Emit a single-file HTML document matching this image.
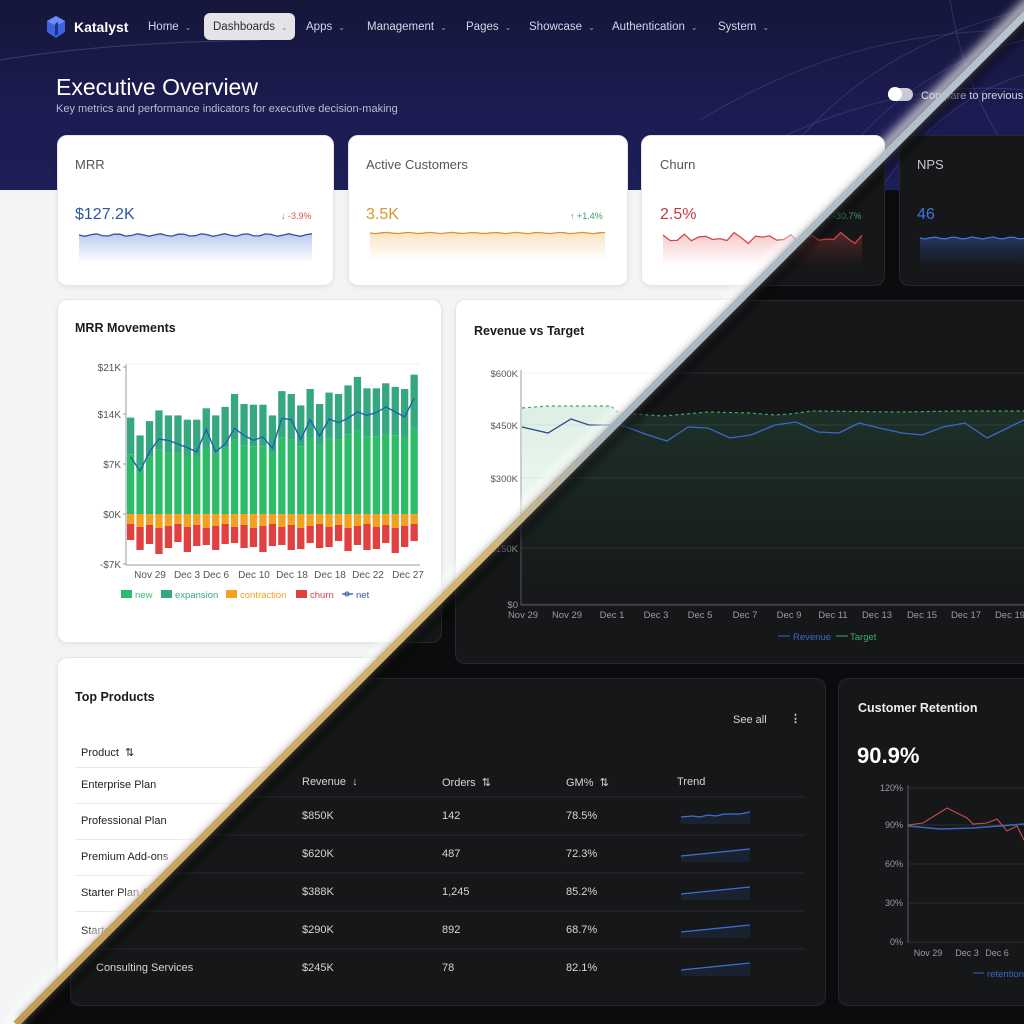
<!DOCTYPE html>
<html><head><meta charset="utf-8">
<style>
*{box-sizing:border-box;margin:0;padding:0}
body{width:1024px;height:1024px;overflow:hidden;font-family:"Liberation Sans",sans-serif;position:relative;background:#f3f4f6}
.layer{position:absolute;left:0;top:0;width:1024px;height:1024px;overflow:hidden}
#light{background:#f3f4f6}
#dark{background:#0c0c0e;clip-path:polygon(1024px 16px,1024px 1024px,16px 1024px)}
.hdr{position:absolute;left:0;top:0;width:1024px;height:190px;background:linear-gradient(180deg,#15163a 0%,#1c1c52 60%,#1d1e56 100%)}
.abs{position:absolute;white-space:nowrap}
.card{position:absolute;border-radius:10px}
#light .card{background:#fff;border:1px solid #e3e5ea;box-shadow:0 2px 6px rgba(0,0,0,.06)}
#dark .card{background:#161719;border:1px solid #26282c}
.nav{font-size:11.5px;color:#d4d7e6}
.nav span.c{font-size:8px;margin-left:6px;color:#9aa0bb}
.lbl{font-size:13px}
#light .lbl{color:#555}
#dark .lbl{color:#c8c8cc}
.ttl{font-size:12.5px;font-weight:bold}
#light .ttl{color:#1b1b1f}
#dark .ttl{color:#eee}
.tx{font-size:11px}
#light .tx{color:#222}
#dark .tx{color:#d6d6d8}
svg text{font-family:"Liberation Sans",sans-serif}
</style></head><body>

<div id="light" class="layer">
  <div class="hdr"></div>
  <svg class="abs" style="left:0;top:0" width="1024" height="190">
    <g fill="none" stroke="#5560a8" stroke-opacity=".35" stroke-width="1">
      <path d="M760 190 C820 100 900 40 1024 10"/>
      <path d="M820 190 C870 110 940 60 1024 40"/>
      <path d="M880 190 C920 130 970 90 1024 75"/>
      <path d="M700 120 C800 60 900 30 1024 30"/>
      <path d="M720 170 C820 110 930 80 1024 90"/>
      <path d="M950 0 C960 60 980 120 1024 170"/>
      <path d="M0 60 C60 50 140 42 260 40" stroke="#8890c8" stroke-opacity=".3"/>
    </g>
  </svg>
  <svg class="abs" style="left:46px;top:15px" width="20" height="24" viewBox="0 0 20 24">
    <path d="M10 1 L19 6 L19 17 L10 23 L1 17 L1 6 Z" fill="#3f63e0"/>
    <path d="M10 1 L19 6 L10 11 L1 6 Z" fill="#6b8cf5"/>
    <path d="M9 9 L12 7 L12 19 L9 21 Z" fill="#1c2f8a"/>
  </svg>
  <div class="abs" style="left:74px;top:19px;font-size:14px;color:#fff;font-weight:bold">Katalyst</div>
  <div class="abs nav" style="left:148px;top:21px">Home<span class="c">⌄</span></div>
  <div class="abs" style="left:204px;top:13px;width:91px;height:27px;border-radius:6px;background:#e4e4e8"></div>
  <div class="abs nav" style="left:213px;top:21px;color:#2a2a33">Dashboards<span class="c" style="color:#888">⌄</span></div>
  <div class="abs nav" style="left:306px;top:21px">Apps<span class="c">⌄</span></div>
  <div class="abs nav" style="left:367px;top:21px">Management<span class="c">⌄</span></div>
  <div class="abs nav" style="left:466px;top:21px">Pages<span class="c">⌄</span></div>
  <div class="abs nav" style="left:529px;top:21px">Showcase<span class="c">⌄</span></div>
  <div class="abs nav" style="left:612px;top:21px">Authentication<span class="c">⌄</span></div>
  <div class="abs nav" style="left:718px;top:21px">System<span class="c">⌄</span></div>
  <div class="abs" style="left:56px;top:74px;font-size:23px;color:#fff">Executive Overview</div>
  <div class="abs" style="left:56px;top:103px;font-size:11px;color:#b9bdd4">Key metrics and performance indicators for executive decision-making</div>
  <div class="abs" style="left:888px;top:88px;width:25px;height:13px;border-radius:7px;background:#c8cad6"></div>
  <div class="abs" style="left:888px;top:87px;width:14px;height:14px;border-radius:7px;background:#fff"></div>
  <div class="abs" style="left:921px;top:90px;font-size:11px;color:#d4d7e6">Compare to previous</div>

  <div class="card" style="left:57px;top:135px;width:277px;height:151px"></div>
  <div class="card" style="left:348px;top:135px;width:280px;height:151px"></div>
  <div class="card" style="left:641px;top:135px;width:244px;height:151px"></div>
  <div class="abs lbl" style="left:75px;top:157px">MRR</div>
  <div class="abs lbl" style="left:366px;top:157px">Active Customers</div>
  <div class="abs lbl" style="left:660px;top:157px">Churn</div>
  <div class="abs" style="left:75px;top:206px;font-size:16px;color:#2d56a0">$127.2K</div>
  <div class="abs" style="left:366px;top:206px;font-size:16px;color:#d99530">3.5K</div>
  <div class="abs" style="left:660px;top:206px;font-size:16px;color:#c9373d">2.5%</div>
  <div class="abs" style="left:281px;top:211px;font-size:9px;color:#d0574f">↓ -3.9%</div>
  <div class="abs" style="left:570px;top:211px;font-size:9px;color:#3aa164">↑ +1.4%</div>

  <div class="card" style="left:57px;top:299px;width:385px;height:344px"></div>
  <div class="abs ttl" style="left:75px;top:321px">MRR Movements</div>
  <div class="card" style="left:455px;top:299px;width:600px;height:365px"></div>
  <div class="abs ttl" style="left:474px;top:324px">Revenue vs Target</div>
  <div class="card" style="left:57px;top:657px;width:780px;height:360px"></div>
  <div class="abs ttl" style="left:75px;top:690px">Top Products</div>
  <div class="abs tx" style="left:81px;top:746px">Product &nbsp;⇅</div>
  <div class="abs" style="left:75px;top:767px;width:420px;height:1px;background:#e6e7ea"></div>
  <div class="abs tx" style="left:81px;top:779px">Enterprise Plan</div>
  <div class="abs" style="left:75px;top:803px;width:420px;height:1px;background:#e6e7ea"></div>
  <div class="abs tx" style="left:81px;top:815px">Professional Plan</div>
  <div class="abs" style="left:75px;top:839px;width:420px;height:1px;background:#e6e7ea"></div>
  <div class="abs tx" style="left:81px;top:851px">Premium Add-ons</div>
  <div class="abs" style="left:75px;top:875px;width:420px;height:1px;background:#e6e7ea"></div>
  <div class="abs tx" style="left:81px;top:887px">Starter Plan Add-ons</div>
  <div class="abs" style="left:75px;top:911px;width:420px;height:1px;background:#e6e7ea"></div>
  <div class="abs tx" style="left:81px;top:925px">Starter Plan</div>
  <div class="abs tx" style="left:96px;top:963px">Consulting Services</div>
  <svg id="lsvg" class="abs" style="left:0;top:0" width="1024" height="1024"></svg>
</div>

<div id="dark" class="layer">
  <div class="hdr"></div>
  <svg class="abs" style="left:0;top:0" width="1024" height="190">
    <g fill="none" stroke="#5560a8" stroke-opacity=".4" stroke-width="1">
      <path d="M760 190 C820 100 900 40 1024 10"/>
      <path d="M820 190 C870 110 940 60 1024 40"/>
      <path d="M880 190 C920 130 970 90 1024 75"/>
      <path d="M720 170 C820 110 930 80 1024 90"/>
      <path d="M950 0 C960 60 980 120 1024 170"/>
    </g>
  </svg>
  <div class="abs" style="left:888px;top:88px;width:25px;height:13px;border-radius:7px;background:#c8cad6"></div>
  <div class="abs" style="left:921px;top:90px;font-size:11px;color:#d4d7e6">Compare to previous</div>
  <div class="card" style="left:641px;top:135px;width:244px;height:151px"></div>
  <div class="card" style="left:899px;top:135px;width:200px;height:151px"></div>
  <div class="abs lbl" style="left:660px;top:157px">Churn</div>
  <div class="abs lbl" style="left:917px;top:157px">NPS</div>
  <div class="abs" style="left:660px;top:206px;font-size:16px;color:#d9454a">2.5%</div>
  <div class="abs" style="left:917px;top:206px;font-size:16px;color:#3d78e0">46</div>
  <div class="abs" style="left:826px;top:211px;font-size:9px;color:#3aa164">↓ -30.7%</div>
  <div class="card" style="left:57px;top:299px;width:385px;height:344px"></div>
  <div class="card" style="left:455px;top:300px;width:600px;height:364px"></div>
  <div class="card" style="left:70px;top:678px;width:756px;height:328px"></div>
  <div class="card" style="left:838px;top:678px;width:220px;height:328px"></div>
  <div class="abs tx" style="left:733px;top:714px">See all</div>
  <div class="abs tx" style="left:790px;top:712px;font-weight:bold">⋮</div>
  <div class="abs tx" style="left:302px;top:776px">Revenue &nbsp;↓</div>
  <div class="abs tx" style="left:442px;top:776px">Orders &nbsp;⇅</div>
  <div class="abs tx" style="left:566px;top:776px">GM% &nbsp;⇅</div>
  <div class="abs tx" style="left:677px;top:776px">Trend</div>
  <div id="drows"></div>
  <div class="abs ttl" style="left:858px;top:701px">Customer Retention</div>
  <div class="abs" style="left:857px;top:743px;font-size:22px;font-weight:bold;color:#fff">90.9%</div>
  <svg id="dsvg" class="abs" style="left:0;top:0" width="1024" height="1024"></svg>
</div>

<svg class="abs" style="left:0;top:0;pointer-events:none" width="1024" height="1024">
  <defs>
    <linearGradient id="band" x1="1040" y1="0" x2="16" y2="1024" gradientUnits="userSpaceOnUse">
      <stop offset="0" stop-color="#b9c6cf"/>
      <stop offset=".42" stop-color="#a5b4bf"/>
      <stop offset=".55" stop-color="#d5b673"/>
      <stop offset="1" stop-color="#c49c55"/>
    </linearGradient>
    <filter id="bl" x="-10%" y="-10%" width="120%" height="120%"><feGaussianBlur stdDeviation="5"/></filter>
  </defs>
  <line x1="1034" y1="0" x2="10" y2="1024" stroke="#fff" stroke-width="14" opacity=".75" filter="url(#bl)"/>
  <line x1="1048" y1="0" x2="24" y2="1024" stroke="#000" stroke-width="12" opacity=".7" filter="url(#bl)"/>
  <line x1="1040" y1="0" x2="16" y2="1024" stroke="url(#band)" stroke-width="7"/>
</svg>

<script>
function pl(pts){return pts.map((p,i)=>(i?'L':'M')+p[0]+' '+p[1]).join(' ')}
function build(dark){
  let s='';
  const gc=dark?'#2a2c30':'#eeeff2', ac=dark?'#55585e':'#9a9ca3', tc=dark?'#9a9ca3':'#555';
  s+='<defs><linearGradient id="gb'+dark+'" x1="0" y1="0" x2="0" y2="1"><stop offset="0" stop-color="#3b6fd8" stop-opacity=".35"/><stop offset="1" stop-color="#3b6fd8" stop-opacity="0"/></linearGradient>'+
     '<linearGradient id="go'+dark+'" x1="0" y1="0" x2="0" y2="1"><stop offset="0" stop-color="#f0a43a" stop-opacity=".3"/><stop offset="1" stop-color="#f0a43a" stop-opacity="0"/></linearGradient>'+
     '<linearGradient id="gr'+dark+'" x1="0" y1="0" x2="0" y2="1"><stop offset="0" stop-color="#e04a4a" stop-opacity=".3"/><stop offset="1" stop-color="#e04a4a" stop-opacity="0"/></linearGradient>'+
     '<linearGradient id="gg'+dark+'" x1="0" y1="0" x2="0" y2="1"><stop offset="0" stop-color="#3fa86a" stop-opacity=".18"/><stop offset="1" stop-color="#3fa86a" stop-opacity="0"/></linearGradient></defs>';
  function spark(x0,x1,yb,amp,col,g,n,jag){let p=[];for(let i=0;i<=n;i++){let x=x0+(x1-x0)*i/n;let y=yb+Math.sin(i*1.7)*amp+(jag?((i*7)%5-2)*amp*.6:0);p.push([x.toFixed(1),y.toFixed(1)])}
    return '<path d="'+pl(p)+' L'+x1+' '+(yb+28)+' L'+x0+' '+(yb+28)+' Z" fill="url(#'+g+dark+')"/><path d="'+pl(p)+'" fill="none" stroke="'+col+'" stroke-width="1.3"/>'}
  s+=spark(79,312,235,1.3,'#2d56a0','gb',40,0);
  s+=spark(370,605,233,0.6,'#d99530','go',40,0);
  s+=spark(663,862,238,2.5,'#d0474a','gr',28,1);
  s+=spark(920,1024,238,1,'#3d78e0','gb',20,0);
  const pos=[13.5,11,13,14.5,13.8,13.8,13.2,13.2,14.8,13.8,15,16.8,15.4,15.3,15.3,13.8,17.2,16.8,15.2,17.5,15.4,17,16.8,18,19.2,17.6,17.6,18.3,17.8,17.5,19.5];
  const net=[8,6,8.7,10.5,10.3,9.8,9.3,8.7,11.8,8.7,9.8,12,11,10.3,10.8,9.2,13.4,13.2,10.4,13.2,10.9,13.3,12.8,13.4,14.3,13.8,14.2,15,14.3,13.6,16.2];
  const y0=514,k=50/7;
  [[21,367],[14,414],[7,464],[0,514],[-7,564]].forEach(v=>{s+='<text x="121" y="'+(v[1]+4)+'" font-size="10" fill="'+tc+'" text-anchor="end">'+(v[0]<0?'-$7K':'$'+v[0]+'K')+'</text><line x1="123" x2="126" y1="'+v[1]+'" y2="'+v[1]+'" stroke="'+ac+'"/>'});
  s+='<line x1="126" y1="364" x2="126" y2="565" stroke="'+ac+'"/><line x1="126" y1="565" x2="420" y2="565" stroke="'+ac+'"/><line x1="126" y1="364" x2="420" y2="364" stroke="'+gc+'"/>';
  let np=[];
  pos.forEach((v,i)=>{const x=127+i*9.45;const h=v*k;const hn=h*0.62;
    s+='<rect x="'+x.toFixed(1)+'" y="'+(y0-h).toFixed(1)+'" width="7.3" height="'+(h-hn).toFixed(1)+'" fill="#35a87f"/>';
    s+='<rect x="'+x.toFixed(1)+'" y="'+(y0-hn).toFixed(1)+'" width="7.3" height="'+hn.toFixed(1)+'" fill="#2dbd68"/>';
    const c=10+(i*3)%5, r=16+((i*7)%11);
    s+='<rect x="'+x.toFixed(1)+'" y="'+y0+'" width="7.3" height="'+c+'" fill="#f4a020"/>';
    s+='<rect x="'+x.toFixed(1)+'" y="'+(y0+c)+'" width="7.3" height="'+r+'" fill="#e0403f"/>';
    np.push([(x+3.6).toFixed(1),(y0-net[i]*k).toFixed(1)]);});
  s+='<path d="'+pl(np)+'" fill="none" stroke="#1f62b0" stroke-width="1.4"/>';
  [['Nov 29',150],['Dec 3',187],['Dec 6',216],['Dec 10',254],['Dec 18',292],['Dec 18',330],['Dec 22',368],['Dec 27',408]].forEach(l=>{s+='<text x="'+l[1]+'" y="578" font-size="10" fill="'+tc+'" text-anchor="middle">'+l[0]+'</text>'});
  s+='<rect x="121" y="590" width="11" height="8" fill="#2dbd68"/><text x="135" y="598" font-size="9.5" fill="#2dbd68">new</text>';
  s+='<rect x="161" y="590" width="11" height="8" fill="#35a87f"/><text x="175" y="598" font-size="9.5" fill="#35a87f">expansion</text>';
  s+='<rect x="226" y="590" width="11" height="8" fill="#f4a020"/><text x="240" y="598" font-size="9.5" fill="#f4a020">contraction</text>';
  s+='<rect x="296" y="590" width="11" height="8" fill="#e0403f"/><text x="310" y="598" font-size="9.5" fill="#e0403f">churn</text>';
  s+='<line x1="342" x2="353" y1="594" y2="594" stroke="#2a58b0" stroke-width="1.3"/><circle cx="347" cy="594" r="2" fill="none" stroke="#2a58b0"/><text x="356" y="598" font-size="9.5" fill="#2a58b0">net</text>';
  [['$600K',373],['$450K',425],['$300K',478],['$150K',548],['$0',604]].forEach(v=>{s+='<text x="518" y="'+(v[1]+4)+'" font-size="9.5" fill="'+tc+'" text-anchor="end">'+v[0]+'</text><line x1="521" x2="1024" y1="'+v[1]+'" y2="'+v[1]+'" stroke="'+gc+'"/>'});
  s+='<line x1="521" y1="370" x2="521" y2="605" stroke="'+ac+'"/><line x1="521" y1="605" x2="1024" y2="605" stroke="'+ac+'"/>';
  ['Nov 29','Nov 29','Dec 1','Dec 3','Dec 5','Dec 7','Dec 9','Dec 11','Dec 13','Dec 15','Dec 17','Dec 19'].forEach((l,i)=>{const x=523+i*44.3;s+='<text x="'+x.toFixed(0)+'" y="618" font-size="9.5" fill="'+tc+'" text-anchor="middle">'+l+'</text>'});
  const tg=[[522,408],[548,406],[611,406],[619,413],[663,416],[708,412],[751,413],[775,415],[790,414],[812,411],[900,412],[960,411],[1024,411]];
  const rv=[[522,427],[548,433],[571,419],[589,425],[611,425],[624,426],[645,434],[667,441],[688,427],[708,428],[730,438],[751,435],[775,425],[796,422],[818,432],[839,433],[859,423],[879,428],[902,433],[922,435],[943,427],[965,423],[987,438],[1024,420]];
  s+='<path d="'+pl(tg)+' L1024 605 L522 605 Z" fill="url(#gg'+dark+')"/>';
  s+='<path d="'+pl(tg)+'" fill="none" stroke="#3fa86a" stroke-width="1.2" stroke-dasharray="3 3"/>';
  s+='<path d="'+pl(rv)+'" fill="none" stroke="'+(dark?'#3a68c8':'#2a4a8a')+'" stroke-width="1.3"/>';
  s+='<line x1="778" x2="790" y1="636" y2="636" stroke="#3a68c8"/><text x="793" y="640" font-size="9.5" fill="#3a68c8">Revenue</text>';
  s+='<line x1="836" x2="848" y1="636" y2="636" stroke="#3fa86a"/><text x="850" y="640" font-size="9.5" fill="#3fa86a">Target</text>';
  if(dark){
    [797,835,873,911,949].forEach(y=>{s+='<line x1="80" x2="805" y1="'+y+'" y2="'+y+'" stroke="#27292d"/>'});
    [816,854,892,930,968].forEach((y,i)=>{
      const d = i==0 ? 'M681 '+(y+1)+' L692 '+y+' L700 '+(y+1)+' L708 '+(y-1)+' L716 '+y+' L724 '+(y-2)+' L740 '+(y-2)+' L750 '+(y-4) : 'M681 '+(y+2)+' L750 '+(y-5);
      s+='<path d="'+d+' L750 '+(y+8)+' L681 '+(y+8)+'Z" fill="#3b6fd8" fill-opacity=".12"/><path d="'+d+'" fill="none" stroke="#3d70d8" stroke-width="1.2"/>'});
    [['120%',788],['90%',825],['60%',864],['30%',903],['0%',942]].forEach(v=>{s+='<text x="903" y="'+(v[1]+3)+'" font-size="9" fill="'+tc+'" text-anchor="end">'+v[0]+'</text><line x1="908" x2="1024" y1="'+v[1]+'" y2="'+v[1]+'" stroke="'+gc+'"/>'});
    s+='<line x1="908" y1="785" x2="908" y2="943" stroke="'+ac+'"/>';
    s+='<path d="M908 826 L940 829 L973 828 L1024 824" fill="none" stroke="#3a68c8" stroke-width="1.6"/>';
    s+='<path d="M908 825 L923 823 L947 808 L957 813 L967 818 L973 824 L987 823 L997 819 L1007 831 L1017 826 L1024 840" fill="none" stroke="#c8504a" stroke-width="1.1"/>';
    [['Nov 29',928],['Dec 3',967],['Dec 6',997]].forEach(l=>{s+='<text x="'+l[1]+'" y="956" font-size="9" fill="'+tc+'" text-anchor="middle">'+l[0]+'</text>'});
    s+='<line x1="973" x2="984" y1="973" y2="973" stroke="#3a68c8"/><text x="987" y="977" font-size="9.5" fill="#3a68c8">retention</text>';
  }
  return s;
}
document.getElementById('lsvg').innerHTML=build(0);
document.getElementById('dsvg').innerHTML=build(1);
const rows=[['$850K','142','78.5%'],['$620K','487','72.3%'],['$388K','1,245','85.2%'],['$290K','892','68.7%'],['$245K','78','82.1%']];
let h='';rows.forEach((r,i)=>{const y=810+i*38;
 h+='<div class="abs tx" style="left:302px;top:'+y+'px">'+r[0]+'</div><div class="abs tx" style="left:442px;top:'+y+'px">'+r[1]+'</div><div class="abs tx" style="left:566px;top:'+y+'px">'+r[2]+'</div>';});
h+='<div class="abs tx" style="left:96px;top:962px">Consulting Services</div>';
document.getElementById('drows').innerHTML=h;
</script>
</body></html>
